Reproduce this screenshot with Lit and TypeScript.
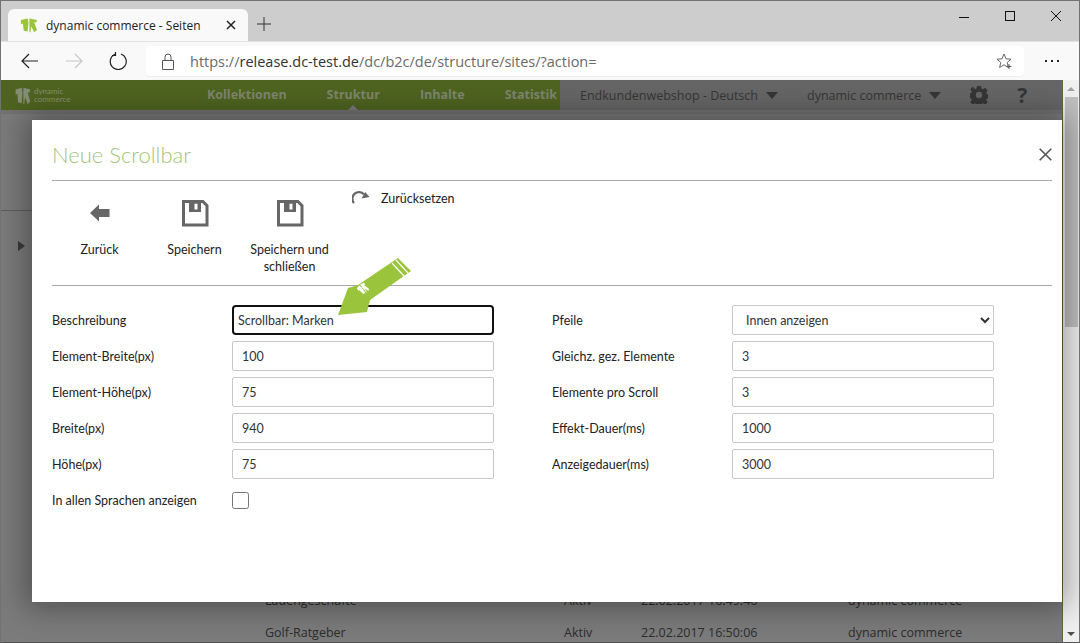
import { LitElement, html, css, svg } from 'lit';
import { customElement } from 'lit/decorators.js';

const saveIcon = html`
    <svg width="28" height="28" viewBox="0 0 28 28">
        <path fill="#666" fill-rule="evenodd" d="M1 1h21.5L27.500 6v21.500H1zM4 4v20.500h20.500V7.200L21.300 4H20v9H8V4zM13.500 4.800v5.700h3V4.800z"/>
    </svg>
`;

const logoMark = (fill: string) => svg`
    <g fill="${fill}">
        <path d="M1 4l7-2 1 6-1 12-4-1-1-10-2 1z"/>
        <path d="M10 2l8 2-1 4-2-1 1 4 2 7-3 3-3-8-1 8-1 0z"/>
    </g>
`;

@customElement('app-root')
export class AppRoot extends LitElement {
    leftFields = [
        ['Element-Breite(px)', '100'],
        ['Element-Höhe(px)', '75'],
        ['Breite(px)', '940'],
        ['Höhe(px)', '75'],
    ];

    rightFields = [
        ['Gleichz. gez. Elemente', '3'],
        ['Elemente pro Scroll', '3'],
        ['Effekt-Dauer(ms)', '1000'],
        ['Anzeigedauer(ms)', '3000'],
    ];

    renderChrome() {
        return html`
            <div class="titlebar">
                <div class="tab">
                    <svg class="favicon" width="17" height="16" viewBox="0 0 18 22" preserveAspectRatio="none">${logoMark('#9ac43c')}</svg>
                    <span class="tab-title">dynamic commerce - Seiten</span>
                    <svg class="tab-close" width="10" height="10" viewBox="0 0 10 10"><path d="M1 1l8 8M9 1l-8 8" stroke="#222" stroke-width="1.500" fill="none"/></svg>
                </div>
                <svg class="new-tab" width="14" height="14" viewBox="0 0 14 14"><path d="M7 0v14M0 7h14" stroke="#333" stroke-width="1" fill="none"/></svg>
                <div class="window-btns">
                    <svg width="12" height="12" viewBox="0 0 12 12"><path d="M1 7.500h10" stroke="#111" fill="none"/></svg>
                    <svg width="12" height="12" viewBox="0 0 12 12"><rect x="1.500" y="1.500" width="9" height="9" stroke="#111" fill="none"/></svg>
                    <svg width="12" height="12" viewBox="0 0 12 12"><path d="M1 1l10 10M11 1L1 11" stroke="#111" fill="none"/></svg>
                </div>
            </div>
            <div class="toolbar">
                <svg class="nav" width="18" height="16" viewBox="0 0 18 16"><path d="M17 8H1M8 1L1 8l7 7" stroke="#222" stroke-width="1.200" fill="none"/></svg>
                <svg class="nav" width="18" height="16" viewBox="0 0 18 16"><path d="M1 8h16M10 1l7 7-7 7" stroke="#c8c8c8" stroke-width="1.200" fill="none"/></svg>
                <svg class="nav reload" width="18" height="18" viewBox="0 0 18 18"><path d="M6 2.200A8 8 0 1 0 12 2M6.500 0v3.500H3" stroke="#222" stroke-width="1.200" fill="none"/></svg>
                <div class="urlbar">
                    <svg width="12" height="17" viewBox="0 0 12 17"><path d="M.5 7.500h11v9H.5zM3 7.500V4a3 3 0 0 1 6 0v3.500" stroke="#555" fill="none"/></svg>
                    <span class="url"><span class="url-dim">https://</span><span class="url-host">release.dc-test.de</span><span class="url-dim">/dc/b2c/de/structure/sites/?action=</span></span>
                    <svg class="star" width="16" height="16" viewBox="0 0 16 16"><path d="M8 1l2 4.800 5 .4-3.800 3.300 1.200 5L8 11.800 3.600 14.500l1.200-5L1 6.200l5-.4z" stroke="#666" fill="none"/><path d="M13 11v5M10.500 13.500h5" stroke="#555" fill="none"/></svg>
                </div>
                <div class="more"><i></i><i></i><i></i></div>
            </div>
        `;
    }

    renderHeader() {
        return html`
            <header class="page-head">
                <div class="head-green">
                    <div class="brand">
                        <svg width="19" height="19" viewBox="0 0 18 22">${logoMark('#868e76')}</svg>
                        <span>dynamic<br />commerce</span>
                    </div>
                    <nav>
                        <a>Kollektionen</a>
                        <a class="current">Struktur</a>
                        <a>Inhalte</a>
                        <a>Statistik</a>
                    </nav>
                </div>
                <div class="head-gray">
                    <span class="menu first">Endkundenwebshop - Deutsch<i class="caret"></i></span>
                    <span class="menu">dynamic commerce<i class="caret"></i></span>
                    <svg class="gear" width="18" height="18" viewBox="0 0 18 18">
                        <path fill="#363636" fill-rule="evenodd" d="M7 0h4l.5 2.600 1.500.6 2.200-1.500 2.500 2.700-1.500 2.100.7 1.600 2.100.4v3.500l-2.100.5-.7 1.500 1.500 2.200-2.500 2.500-2.200-1.500-1.500.7-.5 2.600H7l-.5-2.600-1.500-.7-2.200 1.500-2.500-2.500 1.500-2.200-.7-1.500L-1 10.900V7.400l2.100-.4.7-1.600-1.500-2.100 2.500-2.700L5 3.200l1.500-.6zM9 5.800a3.200 3.200 0 1 0 0 6.400 3.200 3.200 0 0 0 0-6.400z"/>
                    </svg>
                    <span class="help">?</span>
                </div>
            </header>
        `;
    }

    renderBackdrop() {
        return html`
            <div class="backdrop">
                <div class="back-top"></div>
                <div class="back-line"></div>
                <div class="back-tri"></div>
                <div class="back-rows">
                    <div class="row">
                        <span>Ladengeschäfte</span><span>Aktiv</span><span>22.02.2017 16:49:46</span><span>dynamic commerce</span>
                    </div>
                    <div class="row">
                        <span>Golf-Ratgeber</span><span>Aktiv</span><span>22.02.2017 16:50:06</span><span>dynamic commerce</span>
                    </div>
                </div>
            </div>
        `;
    }

    renderField([label, value]: string[]) {
        return html`
            <label>${label}</label>
            <input type="text" .value=${value} />
        `;
    }

    renderModal() {
        return html`
            <section class="modal">
                <div class="modal-head">
                    <h1>Neue Scrollbar</h1>
                    <svg class="modal-close" width="13" height="13" viewBox="0 0 13 13"><path d="M.7.7l11.600 11.600M12.300.7L.7 12.300" stroke="#555" stroke-width="1.600" fill="none"/></svg>
                </div>
                <div class="actions">
                    <div class="action">
                        <span class="action-icon">
                            <svg width="20" height="20" viewBox="0 0 20 20"><path fill="#666" d="M0 10l9-8.500V6h10.500v8H9v4.500z"/></svg>
                        </span>
                        <span>Zurück</span>
                    </div>
                    <div class="action">
                        <span class="action-icon">${saveIcon}</span>
                        <span>Speichern</span>
                    </div>
                    <div class="action">
                        <span class="action-icon">${saveIcon}</span>
                        <span>Speichern und schließen</span>
                    </div>
                    <div class="reset">
                        <svg width="18" height="16" viewBox="0 0 18 16"><path fill="none" stroke="#666" stroke-width="2.200" d="M2 12A6.500 6.500 0 0 1 12 3.400"/><path fill="#666" d="M9.500 7.500l8-1.500-4.300-5z"/></svg>
                        <span>Zurücksetzen</span>
                    </div>
                </div>
                <form class="form">
                    <div class="col">
                        <label>Beschreibung</label>
                        <input class="focused" type="text" .value=${'Scrollbar: Marken'} />
                        ${this.leftFields.map((f) => this.renderField(f))}
                        <label>In allen Sprachen anzeigen</label>
                        <input class="check" type="checkbox" />
                    </div>
                    <div class="col">
                        <label>Pfeile</label>
                        <select><option>Innen anzeigen</option></select>
                        ${this.rightFields.map((f) => this.renderField(f))}
                    </div>
                </form>
                <svg class="pointer" width="90" height="70" viewBox="330 250 90 70">
                    <path fill="#9ac43c" d="M338 315l10-27 10-3 40-27 13 13-41 29-3 12z"/>
                    <path stroke="#fff" stroke-width="1.200" fill="none" d="M392 263l12 13M396 260l12 13"/>
                    <g transform="translate(355 287) rotate(-38) scale(.55)">${logoMark('#fff')}</g>
                </svg>
            </section>
        `;
    }

    render() {
        return html`
            <div class="frame">
                ${this.renderChrome()}
                <div class="viewport">
                    <div class="page">
                        ${this.renderHeader()}
                        ${this.renderBackdrop()}
                    </div>
                    <div class="scrollbar">
                        <i class="up"></i>
                        <div class="thumb"></div>
                        <i class="down"></i>
                    </div>
                    ${this.renderModal()}
                </div>
            </div>
        `;
    }

    static styles = css`
        :host {
            display: block;
            width: 1080px;
            height: 643px;
            font-family: "Lato", "Liberation Sans", sans-serif;
        }

        .frame {
            box-sizing: border-box;
            width: 1080px;
            height: 643px;
            border: 1px solid #727272;
            border-bottom-color: #555;
            display: flex;
            flex-direction: column;
            overflow: hidden;
        }

        /* browser chrome */
        .titlebar {
            height: 40px;
            flex: none;
            background: #cdcdcd;
            display: flex;
            align-items: flex-end;
            padding-left: 7px;
        }

        .tab {
            box-sizing: border-box;
            width: 240px;
            height: 32px;
            background: #f9f9f9;
            border-radius: 6px 6px 0 0;
            display: flex;
            align-items: center;
            padding: 0 12px;
        }

        .favicon {
            margin-right: 9px;
        }

        .tab-title {
            flex: 1;
            font: 12px "Open Sans", sans-serif;
            color: #222;
        }

        .new-tab {
            margin: 0 0 10px 9px;
        }

        .window-btns {
            margin-left: auto;
            align-self: flex-start;
            display: flex;
            gap: 34px;
            padding: 9px 17px 0 0;
        }

        .toolbar {
            height: 39px;
            flex: none;
            background: #f9f9f9;
            display: flex;
            align-items: center;
            padding-left: 20px;
            border-top: 1px solid #e2e2e2;
            box-sizing: border-box;
        }

        .nav {
            margin-right: 26px;
        }

        .reload {
            margin-right: 19px;
        }

        .urlbar {
            box-sizing: border-box;
            width: 878px;
            height: 30px;
            background: #fff;
            border-radius: 4px;
            display: flex;
            align-items: center;
            padding: 0 12px 0 16px;
            box-shadow: 0 1px 1px #eee;
        }

        .url {
            margin-left: 16px;
            font: 14.500px "Open Sans", sans-serif;
            flex: 1;
        }

        .url-dim {
            color: #6a6a6a;
        }

        .url-host {
            color: #333;
        }

        .more {
            display: flex;
            gap: 4px;
            margin-left: 21px;
        }

        .more i {
            width: 2px;
            height: 2px;
            background: #222;
        }

        /* page behind the dialog */
        .viewport {
            flex: 1;
            position: relative;
            display: flex;
            overflow: hidden;
        }

        .page {
            flex: 1;
            min-width: 0;
            background: #7b7b7b;
            display: flex;
            flex-direction: column;
        }

        .page-head {
            height: 30px;
            flex: none;
            display: flex;
        }

        .head-green {
            width: 559px;
            background: #4f6420;
            display: flex;
            align-items: center;
            padding-left: 12px;
            box-sizing: border-box;
        }

        .brand {
            display: flex;
            align-items: center;
            gap: 2px;
            width: 194px;
            color: #868e76;
            font-size: 8px;
            line-height: 8px;
        }

        nav {
            display: flex;
            gap: 40px;
        }

        nav a {
            font: bold 12.500px "Open Sans", sans-serif;
            color: #80866f;
            position: relative;
            line-height: 30px;
        }

        nav a.current::after {
            content: "";
            position: absolute;
            left: 50%;
            bottom: 0;
            margin-left: -5px;
            border: 5px solid transparent;
            border-top: 0;
            border-bottom-color: #7b7b7b;
        }

        .head-gray {
            flex: 1;
            background: #666;
            display: flex;
            align-items: center;
            color: #363636;
            font: 12.500px "Open Sans", sans-serif;
            padding-left: 20px;
        }

        .menu {
            display: flex;
            align-items: center;
        }

        .menu.first {
            margin-right: 29px;
        }

        .caret {
            margin-left: 8px;
            border: 6px solid transparent;
            border-bottom: 0;
            border-top: 7px solid #363636;
        }

        .gear {
            margin: 0 0 0 29px;
        }

        .help {
            margin-left: 29px;
            font: bold 21px "Open Sans", sans-serif;
            color: #363636;
        }

        .backdrop {
            flex: 1;
            position: relative;
            background: #7b7b7b;
        }

        .back-top {
            height: 4px;
            background: #727272;
        }

        .back-line {
            position: absolute;
            left: 0;
            top: 100px;
            width: 31px;
            height: 1px;
            background: #5e5e5e;
        }

        .back-tri {
            position: absolute;
            left: 17px;
            top: 131px;
            border: 5px solid transparent;
            border-right: 0;
            border-left: 7px solid #3a3a3a;
        }

        .back-rows {
            position: absolute;
            left: 264px;
            top: 482px;
            display: flex;
            flex-direction: column;
            gap: 14px;
        }

        .row {
            display: grid;
            grid-template-columns: 299px 77px 207px 1fr;
            font: 12.500px/18px "Open Sans", sans-serif;
            color: #2c2c2c;
            white-space: nowrap;
        }

        .scrollbar {
            width: 17px;
            flex: none;
            background: #f0f0f0;
            border-left: 1px solid #5e6a3c;
            box-sizing: border-box;
            display: flex;
            flex-direction: column;
            align-items: center;
            position: relative;
        }

        .up {
            margin-top: 7px;
            border: 4px solid transparent;
            border-top: 0;
            border-bottom: 4px solid #a3a3a3;
        }

        .thumb {
            width: 13px;
            height: 230px;
            margin-top: 6px;
            background: #c0c0c0;
        }

        .down {
            margin-top: auto;
            margin-bottom: 6px;
            border: 4px solid transparent;
            border-bottom: 0;
            border-top: 4px solid #505050;
        }

        /* dialog */
        .modal {
            position: absolute;
            left: 31px;
            top: 40px;
            width: 1030px;
            height: 482px;
            box-sizing: border-box;
            background: #fff;
            padding: 0 10px 0 20px;
            box-shadow: 0 0 28px 6px rgba(0, 0, 0, 0.35);
            color: #222;
            font-size: 12.500px;
        }

        .modal-head {
            height: 61px;
            box-sizing: border-box;
            border-bottom: 1px solid #a8a8a8;
            display: flex;
            align-items: center;
            justify-content: space-between;
            padding-right: 0;
        }

        h1 {
            margin: 8px 0 0;
            font-size: 22px;
            font-weight: 300;
            color: #a3c47d;
        }

        .modal-close {
            margin-top: 9px;
        }

        .actions {
            height: 105px;
            box-sizing: border-box;
            border-bottom: 1px solid #a8a8a8;
            display: flex;
            padding: 18px 0 0 0;
        }

        .action {
            width: 95px;
            text-align: center;
            line-height: 17px;
            display: flex;
            flex-direction: column;
            align-items: center;
        }

        .action-icon {
            height: 28px;
            margin-bottom: 14px;
            display: flex;
            align-items: center;
        }

        .reset {
            display: flex;
            gap: 11px;
            align-items: flex-start;
            margin-left: 15px;
            margin-top: -8px;
        }

        .form {
            display: flex;
            gap: 58px;
            padding-top: 18px;
        }

        .col {
            width: 442px;
            display: grid;
            grid-template-columns: 180px 262px;
            grid-auto-rows: 32px;
            row-gap: 4px;
            align-items: center;
        }

        input[type="text"],
        select {
            box-sizing: border-box;
            width: 262px;
            height: 30px;
            border: 1px solid #c8c8c8;
            border-radius: 2px;
            padding: 0 9px;
            font: 12.500px "Lato", sans-serif;
            color: #333;
            background: #fff;
        }

        input.focused {
            border: 2px solid #111;
            border-radius: 4px;
            padding: 0 4px;
        }

        .check {
            width: 17px;
            height: 17px;
            margin: 0;
        }

        .pointer {
            position: absolute;
            left: 298px;
            top: 130px;
        }
    `;
}
